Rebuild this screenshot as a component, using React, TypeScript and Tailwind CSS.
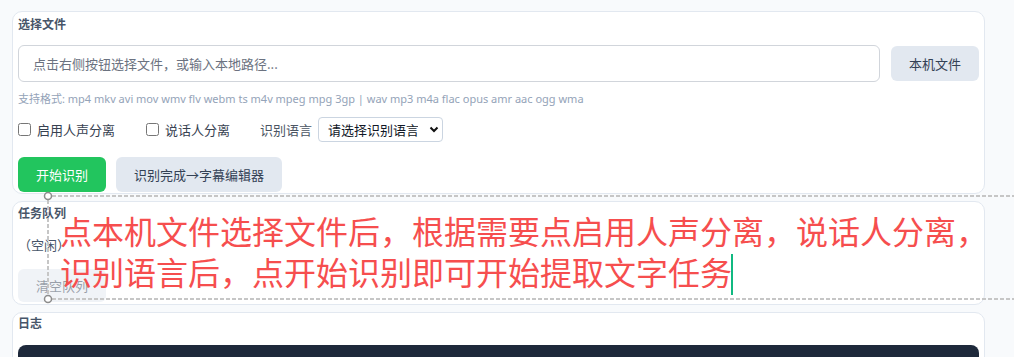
import React from "react";

export default function App() {
  return (
    <div className="relative h-[357px] overflow-hidden bg-[#f8fafc] pl-3 pr-[29px] pt-[11px] font-['Noto_Sans_CJK_SC',sans-serif] text-[#334155]">
      {/* Card 1 */}
      <section className="rounded-[10px] border border-[#e2e8f0] bg-white px-[5px] pt-[4px] pb-px">
        <h2 className="text-[12px] font-bold leading-[16px] text-[#475569]">选择文件</h2>
        <div className="mt-[13px] flex items-center gap-[11px]">
          <input
            className="h-[37px] flex-1 rounded-[6px] border border-[#d1d5db] bg-white px-[14px] text-[13px] placeholder:text-[#6b7280] outline-none"
            placeholder="点击右侧按钮选择文件，或输入本地路径..."
          />
          <button className="h-[35px] w-[88px] rounded-[6px] bg-[#e2e8f0] text-[13px] text-[#334155]">本机文件</button>
        </div>
        <p className="mt-[9px] font-['Noto_Sans','Noto_Sans_CJK_SC',sans-serif] text-[11px] leading-[15px] text-[#94a3b8]">
          支持格式: mp4 mkv avi mov wmv flv webm ts m4v mpeg mpg 3gp | wav mp3 m4a flac opus amr aac ogg wma
        </p>
        <div className="mt-[11px] flex h-[25px] items-center text-[13px]">
          <label className="flex items-center gap-[6px] text-[#374151]">
            <input type="checkbox" className="h-[13px] w-[13px]" />
            启用人声分离
          </label>
          <label className="ml-[31px] flex items-center gap-[6px] text-[#374151]">
            <input type="checkbox" className="h-[13px] w-[13px]" />
            说话人分离
          </label>
          <span className="ml-[30px] text-[#4b5563]">识别语言</span>
          <div className="relative ml-[6px]">
            <select className="h-[25px] w-[125px] appearance-none rounded-[4px] border border-[#cbd5e1] bg-white pl-[9px] pr-6 text-[13px] text-[#111827]">
              <option>请选择识别语言</option>
            </select>
            <svg className="pointer-events-none absolute right-[4px] top-[9px]" width="10" height="7" viewBox="0 0 10 7">
              <path d="M1.5 1.5 L5 5 L8.5 1.5" fill="none" stroke="#111" strokeWidth="2" />
            </svg>
          </div>
        </div>
        <div className="mt-[15px] flex gap-[10px]">
          <button className="h-[35px] rounded-[6px] bg-[#22c55e] px-[18px] text-[13px] text-white">开始识别</button>
          <button className="h-[35px] rounded-[6px] bg-[#e2e8f0] px-[18px] text-[13px] text-[#334155]">识别完成→字幕编辑器</button>
        </div>
      </section>

      {/* Card 2 */}
      <section className="mt-[7px] rounded-[10px] border border-[#e2e8f0] bg-white px-[5px] pt-[3px] pb-[2px]">
        <h2 className="text-[12px] font-bold leading-[16px] text-[#475569]">任务队列</h2>
        <p className="mt-[15px] text-[13px] leading-[18px] text-[#475569]">（空闲）</p>
        <button className="mt-[15px] h-[33px] w-[88px] rounded-[6px] bg-[#e2e8f0] text-[13px] text-[#334155] opacity-50">清空队列</button>
      </section>

      {/* Card 3 */}
      <section className="mt-[7px] rounded-[10px] border border-[#e2e8f0] bg-white px-[5px] pt-[2px]">
        <h2 className="text-[12px] font-bold leading-[16px] text-[#475569]">日志</h2>
        <div className="mt-[14px] h-[80px] rounded-t-[8px] bg-[#1e293b]" />
      </section>

      {/* Annotation overlay */}
      <svg className="pointer-events-none absolute left-0 top-0" width="1014" height="357">
        <g stroke="#c6c6c6" strokeWidth="2" strokeDasharray="4 2" fill="none">
          <line x1="52" y1="196" x2="1014" y2="196" />
          <line x1="52" y1="299" x2="1014" y2="299" />
          <line x1="48" y1="200" x2="48" y2="295" />
        </g>
        <circle cx="48" cy="196" r="3.5" fill="#fff" stroke="#8c8c8c" strokeWidth="1.5" />
        <circle cx="48" cy="299" r="3.5" fill="#fff" stroke="#8c8c8c" strokeWidth="1.5" />
      </svg>
      <div className="pointer-events-none absolute left-[60px] top-[211px] whitespace-nowrap text-[32px] leading-[39px] text-[#f64e4e]">
        点本机文件选择文件后，根据需要点启用人声分离，说话人分离，
        <br />
        识别语言后，点开始识别即可开始提取文字任务
        <span className="ml-[-1px] inline-block h-[41px] w-[2px] translate-y-[4px] bg-[#10b981] align-bottom" />
      </div>
    </div>
  );
}
